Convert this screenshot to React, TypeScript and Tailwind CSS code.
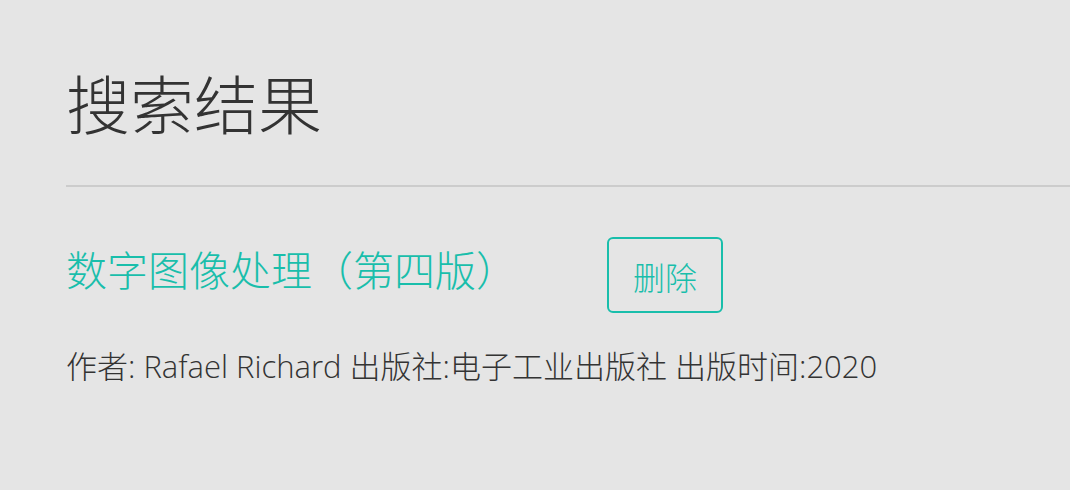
export default function App() {
  return (
    <div
      className="min-h-screen w-full bg-[#e5e5e5] pl-[66px] text-[#333]"
      style={{ fontFamily: '"Open Sans", "Noto Sans CJK SC", sans-serif' }}
    >
      <h1 className="pt-[68px] text-[64px] font-light leading-[74px]">搜索结果</h1>
      <hr className="mt-[43px] border-t-2 border-[#cccccc]" />

      <div className="mt-[50px] flex items-center">
        <h2 className="w-[541px] pb-[10px] text-[41px] font-light leading-[48px] text-[#19beab]">
          数字图像处理（第四版）
        </h2>
        <button className="flex h-[76px] w-[116px] items-center justify-center rounded-md border-2 border-[#19beab] pt-[6px] text-[32px] font-light text-[#19beab]">
          删除
        </button>
      </div>

      <p className="mt-[33px] text-[31px] font-light leading-[40px]">
        作者: Rafael Richard 出版社:电子工业出版社 出版时间:2020
      </p>
    </div>
  );
}
